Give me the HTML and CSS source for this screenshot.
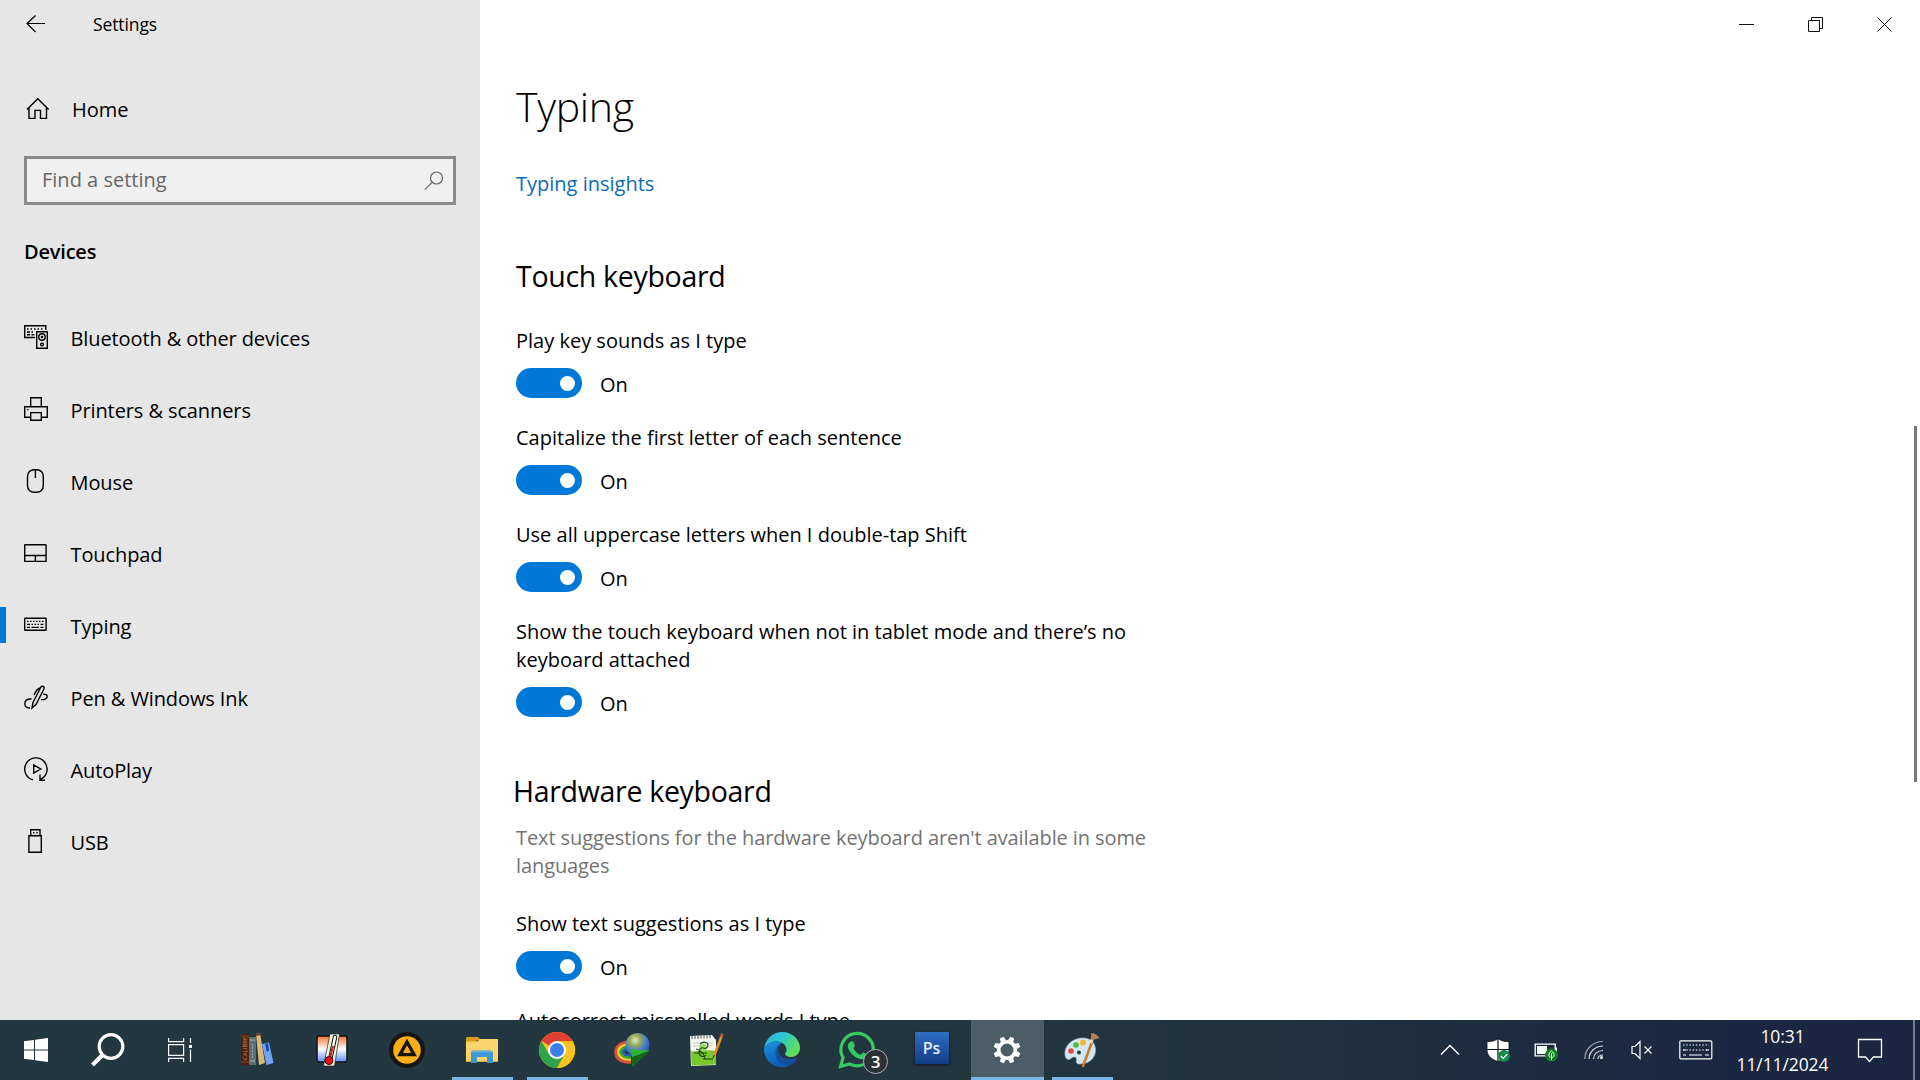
FILE: index.html
```html
<!DOCTYPE html>
<html lang="en">
<head>
    <meta charset="UTF-8">
    <meta name="viewport" content="width=device-width, initial-scale=1.0">
    <title>Settings</title>
    <link rel="stylesheet" href="styles.css">
</head>
<body>

    <div class="window">
        <aside class="sidebar">
            <div class="titlebar">
                <svg class="back" width="20" height="18" viewBox="0 0 20 18"><path d="M19 8.5H1M9.5 0.5L1 8.5l8.500 8.500"/></svg>
                <span class="app-name">Settings</span>
            </div>

            <a class="home">
                <svg class="line-icon" width="24" height="24" viewBox="0 0 24 24"><path d="M1 12.500L11.800 1.800 22.600 12.500M3 11v10.400h6v-8h5.500v8h6V11"/></svg>
                <span>Home</span>
            </a>

            <div class="search-box">
                <span>Find a setting</span>
                <svg width="20" height="20" viewBox="0 0 20 20"><circle cx="12.500" cy="7" r="6"/><path d="M8.200 11.300L0.800 18.700"/></svg>
            </div>

            <h2 class="group-title">Devices</h2>

            <nav class="nav">
                <a class="nav-item">
                    <svg class="line-icon" width="24" height="24" viewBox="0 0 24 24">
                        <path d="M11 12.500H.7V.7h21.100V5M12.700 6.700h10.600v16.600H12.700z"/>
                        <path d="M3 4h1.500M6.500 4H8M10 4h1.500M13.500 4H15M17 4h1.500M3 7h3M7.500 7H9M3 9.700h3M7.500 9.700h3"/>
                        <circle cx="18" cy="12" r="3.200"/><circle cx="18" cy="12" r=".6"/><circle cx="18" cy="19.500" r="1.400"/>
                    </svg>
                    <span>Bluetooth &amp; other devices</span>
                </a>
                <a class="nav-item">
                    <svg class="line-icon" width="24" height="24" viewBox="0 0 24 24">
                        <path d="M6.700 9.500V.7h10.600v8.800M6 20.200H.7V9.700h22.600v10.500H18M6.700 15.600h10.600v7.700H6.700z"/><path d="M3 12.600h1.400"/>
                    </svg>
                    <span>Printers &amp; scanners</span>
                </a>
                <a class="nav-item">
                    <svg class="line-icon" width="24" height="24" viewBox="0 0 24 24"><rect x="3.500" y=".7" width="15.800" height="22.600" rx="6.500"/><path d="M11.400 1v8"/></svg>
                    <span>Mouse</span>
                </a>
                <a class="nav-item">
                    <svg class="line-icon" width="24" height="24" viewBox="0 0 24 24"><rect x=".7" y="3.700" width="21.400" height="16.700" rx=".5"/><path d="M1 14.500h21M11.400 14.500v6"/></svg>
                    <span>Touchpad</span>
                </a>
                <a class="nav-item active">
                    <svg class="line-icon" width="24" height="24" viewBox="0 0 24 24">
                        <rect x=".7" y="5.200" width="21.400" height="12" rx=".5"/>
                        <path d="M3 8.400h1.500M6 8.400h1.500M9 8.400h1.500M12 8.400h1.500M15 8.400h1.500M18 8.400h1.500M3 11.400h3M7.500 11.400H9M10.500 11.400H12M13.500 11.400H15M16.500 11.400h3M3 14.400h3M7.500 14.400H15M16.500 14.400h3"/>
                    </svg>
                    <span>Typing</span>
                </a>
                <a class="nav-item">
                    <svg class="line-icon" width="24" height="24" viewBox="0 0 24 24">
                        <path d="M8 23l1-5.500L16.800 2.200c1-1.800 4.200-.6 3.200 1.600L12 19.500zM16.500 3c-2.500-.5-4 1.500-6.500 7M7.500 14C3 13.500.8 16 .8 18.700S3 23.200 6 23M17 14.500c3.500.5 6.200-.8 6.200-2.900 0-1.700-1.700-2.500-4-2.300"/>
                    </svg>
                    <span>Pen &amp; Windows Ink</span>
                </a>
                <a class="nav-item">
                    <svg class="line-icon" width="24" height="24" viewBox="0 0 24 24"><path d="M9 22.900A11.200 11.200 0 1 1 16.500 22.300M16 17.500v5.800h5M9.700 8v8l7-4z"/></svg>
                    <span>AutoPlay</span>
                </a>
                <a class="nav-item">
                    <svg class="line-icon" width="24" height="24" viewBox="0 0 24 24"><path d="M6.700 6.500V.7h9.300v5.800M4.900 6.700h12.400v16.600H4.900z"/><path d="M9 3.700h1.400M12.300 3.700h1.400"/></svg>
                    <span>USB</span>
                </a>
            </nav>
        </aside>

        <main class="content">
            <div class="window-buttons">
                <svg width="69" height="48" viewBox="0 0 69 48"><path d="M27 24.500h15"/></svg>
                <svg width="69" height="48" viewBox="0 0 69 48"><path d="M27.500 20.500h11v11h-11zM30.500 20.500v-3h11v11h-3"/></svg>
                <svg width="69" height="48" viewBox="0 0 69 48"><path d="M27.500 17.500l14 14M41.500 17.500l-14 14"/></svg>
            </div>

            <h1>Typing</h1>
            <a class="link">Typing insights</a>

            <h3 class="touch-title">Touch keyboard</h3>
            <div class="setting">
                <p>Play key sounds as I type</p>
                <div class="toggle-row"><span class="toggle"></span><span>On</span></div>
            </div>
            <div class="setting">
                <p>Capitalize the first letter of each sentence</p>
                <div class="toggle-row"><span class="toggle"></span><span>On</span></div>
            </div>
            <div class="setting">
                <p>Use all uppercase letters when I double-tap Shift</p>
                <div class="toggle-row"><span class="toggle"></span><span>On</span></div>
            </div>
            <div class="setting">
                <p>Show the touch keyboard when not in tablet mode and there’s no keyboard attached</p>
                <div class="toggle-row"><span class="toggle"></span><span>On</span></div>
            </div>

            <h3 class="hardware-title">Hardware keyboard</h3>
            <p class="hint">Text suggestions for the hardware keyboard aren't available in some languages</p>
            <div class="setting">
                <p>Show text suggestions as I type</p>
                <div class="toggle-row"><span class="toggle"></span><span>On</span></div>
            </div>
            <div class="setting">
                <p>Autocorrect misspelled words I type</p>
            </div>

            <div class="scrollbar"></div>
        </main>
    </div>

    <footer class="taskbar">
        <div class="system-buttons">
            <span class="sys">
                <svg width="24" height="24" viewBox="0 0 24 24" fill="#fff"><path d="M0 3.300L10 2v9.400H0zM11 1.800L24 0v11.400H11zM0 12.400h10V22L0 20.700zM11 12.400h13V24l-13-1.800z"/></svg>
            </span>
            <span class="sys">
                <svg width="34" height="34" viewBox="0 0 34 34" fill="none" stroke="#fff"><circle cx="20" cy="13.500" r="11.800" stroke-width="3.200"/><path d="M11.500 22L1.500 32" stroke-width="4"/></svg>
            </span>
            <span class="sys">
                <svg width="24" height="24" viewBox="0 0 24 24" fill="none" stroke="#fff" stroke-width="1.200"><path d="M.6 0v3.600h15V0M.6 24v-3.600h15V24M.6 6.600h15v10.800H.6zM22.500 0v5M22.500 11.500V24"/><path d="M21 7h3v3h-3z" fill="#fff" stroke="none"/></svg>
            </span>
        </div>

        <div class="apps">
            <span class="app">
                <svg width="36" height="36" viewBox="0 0 36 36">
                    <path d="M2 2h8v31H2z" fill="#4c1f10"/><path d="M2 4h8M2 30h8" stroke="#8a4a22"/>
                    <text x="-28" y="8" transform="rotate(-90)" class="book-text">CALIBRE</text>
                    <path d="M10 5h7v28h-7z" fill="#587077"/><path d="M11 8h5M11 29h5" stroke="#9fb3b8"/><path d="M13.500 12v15" stroke="#8fa5ab" stroke-dasharray="2 1"/>
                    <path d="M17 2l4-1 5 30-6 2z" fill="#d9b977"/><path d="M17 2l4-1 .4 2-4 1z" fill="#7c3415"/>
                    <path d="M23 12l7-1.500L34.500 31l-7 2z" fill="#6fa4f5"/><path d="M26 12l3-.8 1 7-2 2z" fill="#1746b8"/>
                </svg>
            </span>
            <span class="app">
                <svg width="36" height="36" viewBox="0 0 36 36">
                    <defs><linearGradient id="heat" x1="0" y1="0" x2="0" y2="1"><stop offset="0" stop-color="#f2722b"/><stop offset=".5" stop-color="#fff"/><stop offset="1" stop-color="#5b8df0"/></linearGradient></defs>
                    <rect x="3" y="4" width="30" height="26" rx="2" fill="url(#heat)" stroke="#111" stroke-width="1.500"/>
                    <path d="M16 2h9.500l-5 32H9.500z" fill="#eef7dd" stroke="#222" stroke-width=".7"/>
                    <path d="M21 5l-5 23" stroke="#111" stroke-width="4.500" stroke-linecap="round"/><path d="M21 5l-5 23" stroke="#fff" stroke-width="2.500" stroke-linecap="round"/><path d="M19 14l-3.500 14" stroke="#c22" stroke-width="2"/>
                    <circle cx="15" cy="28.500" r="4" fill="#e0101c" stroke="#400"/>
                </svg>
            </span>
            <span class="app">
                <svg width="36" height="36" viewBox="0 0 36 36"><circle cx="18" cy="18" r="18" fill="#171512"/><circle cx="18" cy="18" r="13.800" fill="#fbaf17"/><path d="M18 10l7 12.500H11z" fill="none" stroke="#171512" stroke-width="3.400"/><path d="M15.500 20.500l5 0" stroke="#fbaf17" stroke-width="1"/></svg>
            </span>
            <span class="app open">
                <svg width="36" height="36" viewBox="0 0 36 36">
                    <path d="M2 7c0-1.500.5-2 2-2h10l3 3h-4l-2 4H2z" fill="#d89d14"/><path d="M2 9.500h11l3-2.500h18v22H2z" fill="#fcd46b"/><path d="M2 29h32v1H2z" fill="#e5ad33"/>
                    <path d="M7 31V21c0-1.500 1-2.500 2.500-2.500h17c1.500 0 2.500 1 2.500 2.500v10h-6v-6H13v6z" fill="#3f97d3"/><path d="M7.500 19.500h21" stroke="#64b4e6" stroke-width="1.500"/>
                </svg>
            </span>
            <span class="app open">
                <svg width="36" height="36" viewBox="0 0 36 36">
                    <circle cx="18" cy="18" r="18" fill="#fcc31e"/>
                    <path d="M18 18L2.400 9A18 18 0 0 1 33.600 9z" fill="#df4031"/>
                    <path d="M2.400 9A18 18 0 0 0 18 36l7.800-13.500L18 18 10.200 22.500z" fill="#2fa24c"/>
                    <path d="M18 9h15.600A18 18 0 0 1 18 36l7.800-13.500z" fill="#fcc31e"/>
                    <circle cx="18" cy="18" r="9" fill="#fff"/><circle cx="18" cy="18" r="7" fill="#3d7fea"/>
                </svg>
            </span>
            <span class="app">
                <svg width="36" height="36" viewBox="0 0 36 36" fill="none">
                    <defs><radialGradient id="globe" cx=".4" cy=".3" r=".8"><stop offset="0" stop-color="#e8eeb4"/><stop offset=".3" stop-color="#93a85c"/><stop offset=".55" stop-color="#4a7fd0"/><stop offset="1" stop-color="#1b3f8f"/></radialGradient></defs>
                    <path d="M14 10C4 11 1 17 2 22c1 6 8 9 15 8" stroke="#e0503a" stroke-width="3"/>
                    <path d="M14 12.500C7 13 3.500 17 4.500 21.500 6 26 11 28 17 27.500" stroke="#f4d02c" stroke-width="2.500"/>
                    <path d="M14 15C9 15.500 6 18 7 21c1 3 5 5 10 4.500" stroke="#38a83c" stroke-width="2.500"/>
                    <path d="M14 17C10 18 8.500 19 9.500 21c1 2 4 2.500 8 2" stroke="#2e61c8" stroke-width="2"/>
                    <circle cx="23.500" cy="13" r="12" fill="url(#globe)"/>
                    <path d="M16 17.500l19.500 1L18.500 34.500l-.5-9.500z" fill="#2fb430"/><path d="M18 25l17.500-6.500L18.500 34.500z" fill="#12651a"/>
                </svg>
            </span>
            <span class="app">
                <svg width="36" height="36" viewBox="0 0 36 36">
                    <path d="M1 4l22-1 4 5v25L2 34z" fill="#f5f8f0"/><path d="M2 19c8 1 15-2 25 0v13.500L2.500 33.500z" fill="#79c82d"/>
                    <path d="M3 4v3M6 4v3M9 4v3M12 3.500v3M15 3.500v3M18 3.500v3M21 3v3" stroke="#555"/><path d="M4 11h20M4 14h20" stroke="#c4cfc8"/>
                    <circle cx="14" cy="16" r="4" fill="#89db3b" fill-opacity=".8"/>
                    <path d="M11 12c3-3 8-2 8 1s-3 4-5 3-4 2-4 5 5 5 7 2M5 21h13M7 17c4 1 8 4 9 10M14 27h10" fill="none" stroke="#1c4215" stroke-width="1.100"/>
                    <path d="M33 3L25 24" stroke="#e39321" stroke-width="2.600"/><path d="M33.500 1.500L32 5" stroke="#b74b4b" stroke-width="2.800"/><path d="M25.300 23l-1.300 3" stroke="#222"/>
                </svg>
            </span>
            <span class="app">
                <svg width="36" height="36" viewBox="0 0 36 36">
                    <defs>
                        <linearGradient id="edge-top" x1="0" y1="0" x2="1" y2=".5"><stop offset="0" stop-color="#2eb1e2"/><stop offset=".5" stop-color="#2ec7cf"/><stop offset="1" stop-color="#63e05a"/></linearGradient>
                        <linearGradient id="edge-low" x1="0" y1="0" x2=".3" y2="1"><stop offset="0" stop-color="#1b8fdc"/><stop offset="1" stop-color="#0b5fb9"/></linearGradient>
                    </defs>
                    <path d="M0 17C1 7 9 0 18 0c11 0 18 8 18 16 0 6-5 9-9 9-4 0-6-1.500-6-3 0-1 1.500-1.500 1.500-4.500 0-4-4-8-10-8C7 9.500 2 12 0 17z" fill="url(#edge-top)"/>
                    <path d="M0 17c2-5 7-8 12.500-7.500 2 0 4 .5 5.500 1.500-4 2-5.500 5-5.500 9 0 7 6 14 14 13A18 18 0 0 1 0 17z" fill="url(#edge-low)"/>
                    <path d="M16 12.500c-3 2-5 5-4.500 10C12.500 30 19 35 26.500 33c3-1.500 5.500-4 7-6.500.4-.7-.2-1-.8-.7C26 29 14.500 27 14.500 18c0-2.500.5-4 1.500-5.500z" fill="#134f9d"/>
                </svg>
            </span>
            <span class="app">
                <svg width="36" height="36" viewBox="0 0 36 36">
                    <path d="M1.500 34.500l2.600-8.800A16.200 16.200 0 1 1 10.500 31.900z" fill="none" stroke="#36c960" stroke-width="3.200"/>
                    <path d="M12 9.500c1-.5 2-.3 2.400.5l1.500 3.500c.3.800-1.700 2.300-1.400 3 1.500 3 4 5 7 6.200.8.300 2-2.500 3-2.100l3.500 1.700c1.200.6 0 3.500-1 4.200C20 30 9 21 8.800 14c0-2 1.500-3.800 3.200-4.500z" fill="#36c960"/>
                </svg>
                <b class="badge">3</b>
            </span>
            <span class="app"><b class="ps">Ps</b></span>
            <span class="app open current">
                <svg width="28" height="28" viewBox="-14 -14 28 28" fill="none" stroke="#fff">
                    <circle r="8.300" stroke-width="3.600"/>
                    <path d="M-2.800-9.500L-2-13.500H2L2.800-9.500z" id="tooth" fill="#fff" stroke="none" transform="rotate(22.500)"/>
                    <use href="#tooth" transform="rotate(45)"/><use href="#tooth" transform="rotate(90)"/><use href="#tooth" transform="rotate(135)"/><use href="#tooth" transform="rotate(180)"/><use href="#tooth" transform="rotate(225)"/><use href="#tooth" transform="rotate(270)"/><use href="#tooth" transform="rotate(315)"/>
                </svg>
            </span>
            <span class="app open">
                <svg width="36" height="36" viewBox="0 0 36 36">
                    <path d="M1 23C0 13 9 6 19 6c8 0 12 5 12.500 11C32 26 25 32 16 32c-4 0-4-2-3.500-4 .5-2.500-1-3.500-3-3-2 .4-3 2.500-5 2.500S1.200 25 1 23z" fill="#d3e6f2" stroke="#92b6cf" stroke-width=".7"/>
                    <circle cx="15" cy="20.500" r="2" fill="#203848"/><circle cx="7" cy="19" r="2.800" fill="#dc4a3c"/><circle cx="12" cy="13" r="2.800" fill="#55b83e"/><circle cx="19" cy="10.500" r="3" fill="#f3b52b"/>
                    <path d="M28 10l-9 24" stroke="#c97a2c" stroke-width="2.600" stroke-linecap="round"/><path d="M27 1.500c3-1.500 7 2 8.500 4.500l-6.500 2-2.500-1c1-2 .8-3.500.5-5.500z" fill="#b58155"/><path d="M26.500 7l3 1.200-1.200 3.300-3-1z" fill="#e6d9c8"/>
                </svg>
            </span>
        </div>

        <div class="tray">
            <span class="tray-item">
                <svg width="20" height="12" viewBox="0 0 20 12" fill="none" stroke="#fff" stroke-width="1.300"><path d="M1 10.500l9-9 9 9"/></svg>
            </span>
            <span class="tray-item">
                <svg width="24" height="24" viewBox="0 0 24 24">
                    <path d="M12 .5C9 3 5 3.700 1 3.700V12c0 6 5 9.500 11 11.500C18 21.500 23 18 23 12V3.700C19 3.700 15 3 12 .5z" fill="#fff" stroke="#111" stroke-width=".8"/><path d="M12 0v24M1 11.500h22" stroke="#111" stroke-width="1.200"/>
                    <circle cx="18" cy="18" r="6" fill="#16894b"/><path d="M14.800 18l2.400 2.400 4-4.200" fill="none" stroke="#fff" stroke-width="1.300"/>
                </svg>
            </span>
            <span class="tray-item">
                <svg width="24" height="24" viewBox="0 0 24 24">
                    <path d="M1.200 6.200h20v11.600h-20z" fill="none" stroke="#fff" stroke-width="1.300"/><path d="M22 9.500v5" stroke="#fff" stroke-width="2"/><path d="M3 8h10v8H3z" fill="#fff"/>
                    <circle cx="17.500" cy="17" r="6.500" fill="#10801c"/><path d="M17.500 12.800c3.500 3 3.500 6.200 0 7-3.500-.8-3.500-4 0-7zM17.500 15v7" fill="none" stroke="#fff"/>
                </svg>
            </span>
            <span class="tray-item">
                <svg width="20" height="20" viewBox="0 0 20 20" fill="none" stroke="#d5dadf" stroke-width="1.200"><path d="M.8 19C.8 9 9 1.500 19 1.500" stroke="#9ca7b0"/><path d="M5 19C5 11.500 11.500 6 19 6M9.500 19c0-5 4-8.500 9.500-8.500M14 19c0-2.500 2-4 5-4"/><circle cx="17.500" cy="17.500" r="1.500" fill="#fff" stroke="none"/></svg>
            </span>
            <span class="tray-item">
                <svg width="22" height="20" viewBox="0 0 22 20" fill="none" stroke="#fff" stroke-width="1.200"><path d="M1 6.500h3l5-5v17l-5-5H1zM13.500 6.500l7 7M20.500 6.500l-7 7"/></svg>
            </span>
            <span class="tray-item touch-keyboard">
                <svg width="34" height="20" viewBox="0 0 34 20" fill="none" stroke="#fff" stroke-width="1.200"><rect x=".8" y=".8" width="32" height="18" rx="1"/><path d="M4 5h26M4 10h26" stroke-dasharray="1.500 1.700"/><path d="M4 10h3M27 10h3M4 15h3M10 15h13M26 15h4"/></svg>
            </span>
            <div class="clock">
                <span>10:31</span>
                <span>11/11/2024</span>
            </div>
            <span class="tray-item notifications">
                <svg width="26" height="26" viewBox="0 0 26 26" fill="none" stroke="#fff" stroke-width="1.300"><path d="M1.500 1.500h23V19H16.500L12.500 23.500 8.500 19h-7z"/></svg>
            </span>
            <span class="show-desktop"></span>
        </div>
    </footer>

</body>
</html>
```
FILE: styles.css
```css
* {
    box-sizing: border-box;
}

body {
    margin: 0;
    width: 1920px;
    height: 1080px;
    overflow: hidden;
    font-family: "Open Sans", "Noto Sans", sans-serif;
    font-size: 20px;
    line-height: 28px;
    color: #000;
}

svg {
    display: block;
    flex-shrink: 0;
    overflow: visible;
}

h1, h2, h3, p {
    margin: 0;
    font-weight: 400;
}

.window {
    display: flex;
    height: 1020px;
    overflow: hidden;
}

/* Left pane */
.sidebar {
    width: 480px;
    background-color: #e6e6e6;
}

.titlebar {
    display: flex;
    align-items: center;
    height: 48px;
    padding-left: 26px;
}

.back {
    fill: none;
    stroke: #000;
    stroke-width: 1.2;
}

.app-name {
    margin-left: 47px;
    font-size: 17.5px;
    letter-spacing: -0.1px;
}

.line-icon {
    fill: none;
    stroke: #000;
    stroke-width: 1.4;
}

.home {
    display: flex;
    align-items: center;
    height: 60px;
    margin-top: 28px;
    padding: 6px 0 0 26px;
    gap: 22px;
}

.home span {
    padding-top: 2px;
}

.search-box {
    display: flex;
    align-items: center;
    justify-content: space-between;
    width: 432px;
    height: 49px;
    margin: 20px 0 0 24px;
    padding: 0 9px 2px 15px;
    border: 3px solid #8a8a8a;
    background-color: #f0f0f0;
    color: #666;
}

.search-box svg {
    margin-top: 2px;
    fill: none;
    stroke: #666;
    stroke-width: 1.2;
}

.group-title {
    margin: 33px 0 0 24px;
    font-size: 20px;
    font-weight: 600;
    letter-spacing: -0.2px;
}

.nav {
    margin-top: 35px;
}

.nav-item {
    display: flex;
    align-items: center;
    height: 72px;
    padding-left: 24px;
    gap: 22.5px;
    letter-spacing: -0.1px;
}

.nav-item span {
    padding-top: 4px;
}

.nav-item.active {
    background: linear-gradient(#0078d7, #0078d7) 0 18px / 6px 36px no-repeat;
}

/* Right pane */
.content {
    position: relative;
    flex: 1;
    padding-left: 36px;
}

.window-buttons {
    display: flex;
    justify-content: flex-end;
    height: 48px;
    padding-right: 1px;
}

.window-buttons svg {
    fill: none;
    stroke: #111;
    stroke-width: 1;
}

h1 {
    margin-top: 30px;
    font-size: 41px;
    font-weight: 350;
    line-height: 56px;
    letter-spacing: -0.3px;
}

.link {
    display: block;
    margin-top: 36px;
    color: #0a6bb8;
}

h3 {
    font-size: 28.5px;
    line-height: 40px;
    letter-spacing: -0.3px;
}

.touch-title {
    margin: 58px 0 31px;
}

.hardware-title {
    margin: 54px 0 13px -3px;
}

.hint {
    width: 650px;
    margin-bottom: 30px;
    color: #737373;
    letter-spacing: -0.1px;
}

.setting {
    width: 640px;
}

.setting + .setting {
    margin-top: 26px;
}

.toggle-row {
    display: flex;
    align-items: center;
    gap: 18px;
    height: 30px;
    margin-top: 13px;
    padding-top: 4px;
}

.toggle {
    display: flex;
    align-items: center;
    justify-content: flex-end;
    width: 66px;
    height: 30px;
    margin-top: -4px;
    padding-right: 7px;
    border-radius: 15px;
    background-color: #0078d7;
}

.toggle::after {
    content: "";
    width: 15px;
    height: 15px;
    margin-top: 1px;
    border-radius: 50%;
    background-color: #fff;
}

.scrollbar {
    position: absolute;
    top: 426px;
    right: 3px;
    width: 3px;
    height: 356px;
    background-color: #7a7a7a;
}

/* Taskbar */
.taskbar {
    display: flex;
    height: 60px;
    background: linear-gradient(90deg, #223840 0%, #22363f 50%, #1f3040 70%, #1a2742 90%, #1b2542 100%);
    color: #fff;
}

.system-buttons {
    display: flex;
    width: 221px;
}

.sys {
    display: flex;
    align-items: center;
    justify-content: center;
    width: 72px;
}

.apps {
    display: flex;
    gap: 2px;
}

.app {
    position: relative;
    display: flex;
    align-items: center;
    justify-content: center;
    width: 73px;
    padding-right: 2px;
}

.app.open::after {
    content: "";
    position: absolute;
    bottom: 0;
    left: 6px;
    right: 6px;
    height: 3px;
    background-color: #7ab6e6;
}

.app.current {
    background-color: #4d5d66;
}

.app.current::after {
    left: 0;
    right: 0;
}

.book-text {
    font-size: 6px;
    fill: #d3903f;
}

.badge {
    position: absolute;
    top: 29px;
    left: 42px;
    width: 25px;
    height: 25px;
    border: 1px solid #a9b0b3;
    border-radius: 50%;
    background-color: #2b3235;
    font-size: 17px;
    font-weight: 600;
    line-height: 23px;
    text-align: center;
}

.ps {
    width: 34px;
    height: 32px;
    margin-top: -4px;
    background: linear-gradient(#2e6cc4, #123c85);
    box-shadow: 0 1px 3px rgba(0, 0, 0, 0.6);
    color: #e4f0fc;
    font-size: 16px;
    font-weight: 600;
    line-height: 32px;
    text-align: center;
}

.tray {
    display: flex;
    margin-left: auto;
}

.tray-item {
    display: flex;
    align-items: center;
    justify-content: center;
    width: 48px;
}

.touch-keyboard {
    width: 59px;
}

.clock {
    display: flex;
    flex-direction: column;
    width: 115px;
    margin-right: 1px;
    padding-top: 2px;
    font-size: 17.5px;
    line-height: 28px;
    letter-spacing: -0.1px;
    text-align: center;
}

.notifications {
    width: 58px;
    padding-top: 1px;
}

.show-desktop {
    width: 2px;
    margin: 0 5px 0 14px;
    background-color: #747d8d;
}
```
